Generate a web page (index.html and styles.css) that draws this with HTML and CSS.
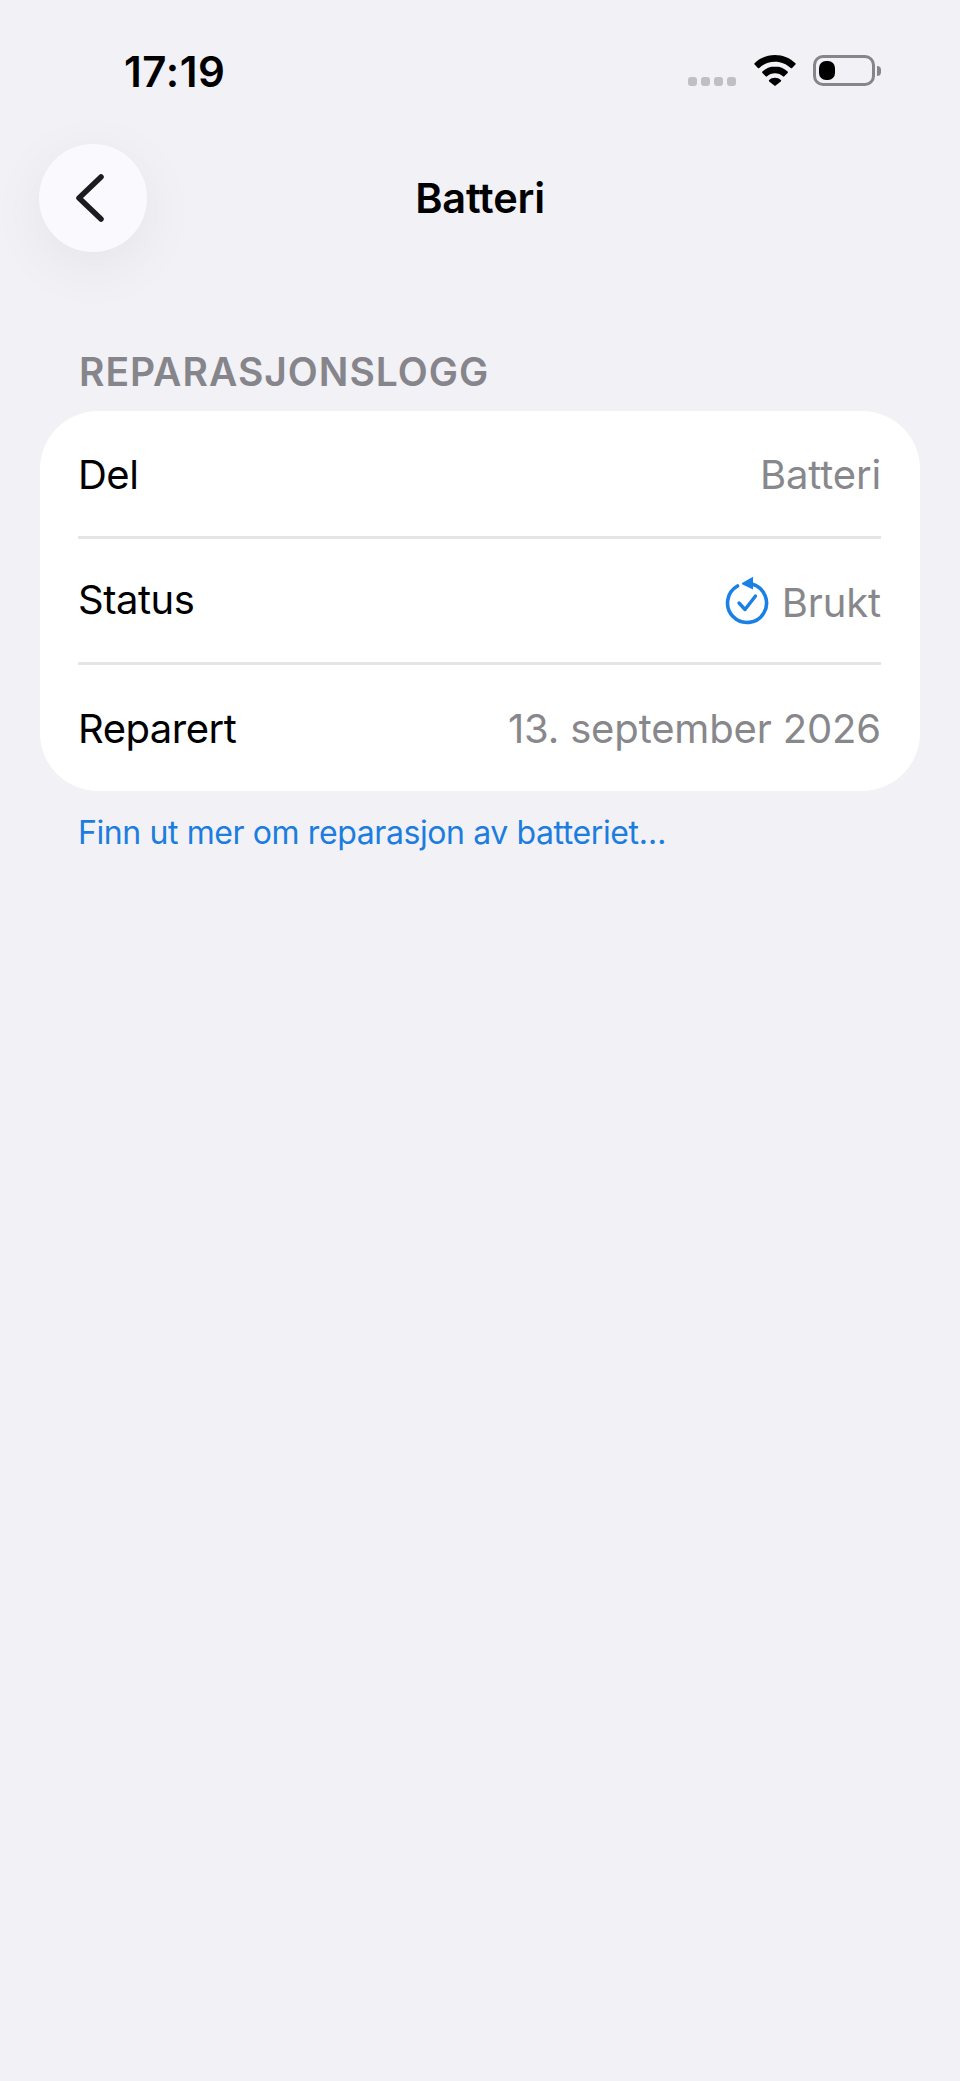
FILE: index.html
```html
<!DOCTYPE html>
<html lang="nb">

<head>
  <meta charset="UTF-8">
  <title>Batteri</title>
  <link rel="stylesheet" href="styles.css">
</head>

<body>

  <!-- Status bar -->
  <div class="status-bar">
    <span class="time">17:19</span>
    <div class="status-icons">
      <div class="signal">
        <span class="dot"></span>
        <span class="dot"></span>
        <span class="dot"></span>
        <span class="dot"></span>
      </div>
      <svg class="wifi" viewBox="0 0 42 31" width="42" height="31">
        <path d="M21 0C13 0 5.900 3.100 .6 8.200a1 1 0 0 0 0 1.400l3.300 3.400a1 1 0 0 0 1.400 0C9.400 9.100 14.900 6.700 21 6.700s11.600 2.400 15.700 6.300a1 1 0 0 0 1.400 0l3.300-3.400a1 1 0 0 0 0-1.400C36.100 3.100 29 0 21 0z" />
        <path d="M21 11.500c-4.900 0-9.300 1.900-12.600 5a1 1 0 0 0 0 1.400l3.300 3.400a1 1 0 0 0 1.400 0c2.100-1.900 4.900-3.100 7.900-3.100s5.800 1.200 7.900 3.100a1 1 0 0 0 1.400 0l3.300-3.400a1 1 0 0 0 0-1.400c-3.300-3.100-7.700-5-12.600-5z" />
        <path d="M21 22.800c-2.200 0-4.200.8-5.800 2.200a1 1 0 0 0 0 1.400l5.100 4.200a1 1 0 0 0 1.400 0l5.100-4.200a1 1 0 0 0 0-1.400c-1.600-1.400-3.600-2.200-5.800-2.200z" />
      </svg>
      <div class="battery">
        <div class="battery-body">
          <div class="battery-level"></div>
        </div>
        <div class="battery-nub"></div>
      </div>
    </div>
  </div>

  <!-- Nav bar -->
  <div class="nav-bar">
    <button class="back-button">
      <svg viewBox="0 0 34 50" width="34" height="50">
        <path d="M27 4 L5 25 L27 46" fill="none" stroke="#1c1c1e" stroke-width="5.500" stroke-linecap="round" stroke-linejoin="round" />
      </svg>
    </button>
    <h1 class="nav-title">Batteri</h1>
  </div>

  <!-- Repair log -->
  <h2 class="section-title">REPARASJONSLOGG</h2>
  <div class="card">
    <div class="row row-first">
      <span class="label">Del</span>
      <span class="value">Batteri</span>
    </div>
    <div class="row">
      <span class="label label-status">Status</span>
      <span class="value value-status">
        <svg viewBox="0 0 44 50" width="44" height="50">
          <path d="M27.500 8.300 A19.500 19.500 0 1 1 12.500 10" fill="none" stroke="#1a80e6" stroke-width="3.600" stroke-linecap="round" />
          <path d="M28 .8 V13.500 L17.500 8.500 a1 1 0 0 1 0-1.700z" fill="#1a80e6" />
          <path d="M14 27 L20 33.500 L30.500 20" fill="none" stroke="#1a80e6" stroke-width="3.400" stroke-linecap="round" stroke-linejoin="round" />
        </svg>
        <span class="status-text">Brukt</span>
      </span>
    </div>
    <div class="row row-last">
      <span class="label">Reparert</span>
      <span class="value">13. september 2026</span>
    </div>
  </div>
  <a class="more-link" href="#">Finn ut mer om reparasjon av batteriet…</a>

</body>

</html>
```

FILE: styles.css
```css
body {
  font-family: 'Inter', 'Liberation Sans', sans-serif;
  background: #f1f1f6;
  margin: 0;
  padding: 0;
  color: #000;
  overflow: hidden;
}

.status-bar {
  display: flex;
  justify-content: space-between;
  align-items: flex-start;
  height: 144px;
  padding: 0 79px 0 124px;
  box-sizing: border-box;
}

.time {
  font-size: 42px;
  font-weight: 600;
  line-height: 48px;
  margin-top: 48px;
  letter-spacing: 0.6px;
}

.status-icons {
  display: flex;
  align-items: flex-start;
  margin-top: 55px;
}

.signal {
  display: flex;
  gap: 4px;
  margin-top: 22px;
  margin-right: 18px;
}

.dot {
  width: 9px;
  height: 9px;
  border-radius: 3px;
  background: #c0c0c4;
}

.wifi {
  fill: #000;
  margin-right: 17px;
}

.battery {
  display: flex;
  align-items: center;
  height: 31px;
}

.battery-body {
  width: 62px;
  height: 31px;
  box-sizing: border-box;
  border: 3px solid #85858a;
  border-radius: 10px;
  padding: 3px;
}

.battery-level {
  width: 16px;
  height: 100%;
  background: #000;
  border-radius: 7px;
}

.battery-nub {
  width: 4px;
  height: 10px;
  margin-left: 2px;
  background: #85858a;
  border-radius: 0 5px 5px 0;
}

.nav-bar {
  display: flex;
  align-items: center;
  justify-content: center;
  height: 108px;
  position: relative;
}

.back-button {
  position: absolute;
  left: 39px;
  top: 0;
  width: 108px;
  height: 108px;
  display: flex;
  align-items: center;
  justify-content: center;
  border: none;
  border-radius: 50%;
  padding: 0 4px 0 0;
  background: #fafafe;
  box-shadow: 0 14px 60px rgba(0, 0, 0, 0.06);
}

.nav-title {
  font-size: 41.500px;
  font-weight: 600;
  margin: 0;
  letter-spacing: -0.2px;
}

.section-title {
  font-size: 39px;
  font-weight: 600;
  line-height: 44px;
  color: #85858b;
  letter-spacing: 1px;
  margin: 98px 0 0 79px;
}

.card {
  background: white;
  margin: 17px 40px 0;
  padding: 0 39px 0 38px;
  border-radius: 58px;
}

.row {
  display: flex;
  justify-content: space-between;
  align-items: center;
  height: 126px;
  border-bottom: 3px solid #e5e5e8;
  box-sizing: border-box;
}

.row-first {
  height: 128px;
  padding-top: 2px;
}

.row-last {
  height: 126px;
  border-bottom: none;
}

.label {
  font-size: 40px;
  letter-spacing: -0.5px;
}

.label-status {
  margin-bottom: 3px;
}

.value {
  font-size: 40px;
  letter-spacing: -0.15px;
  color: #88888c;
}

.value-status {
  display: flex;
  align-items: center;
  gap: 13px;
}

.status-text {
  margin-top: 3px;
}

.more-link {
  display: block;
  font-size: 32px;
  line-height: 40px;
  margin: 22px 0 0 78px;
  color: #1c7ddf;
  text-decoration: none;
  letter-spacing: -0.4px;
}
```
